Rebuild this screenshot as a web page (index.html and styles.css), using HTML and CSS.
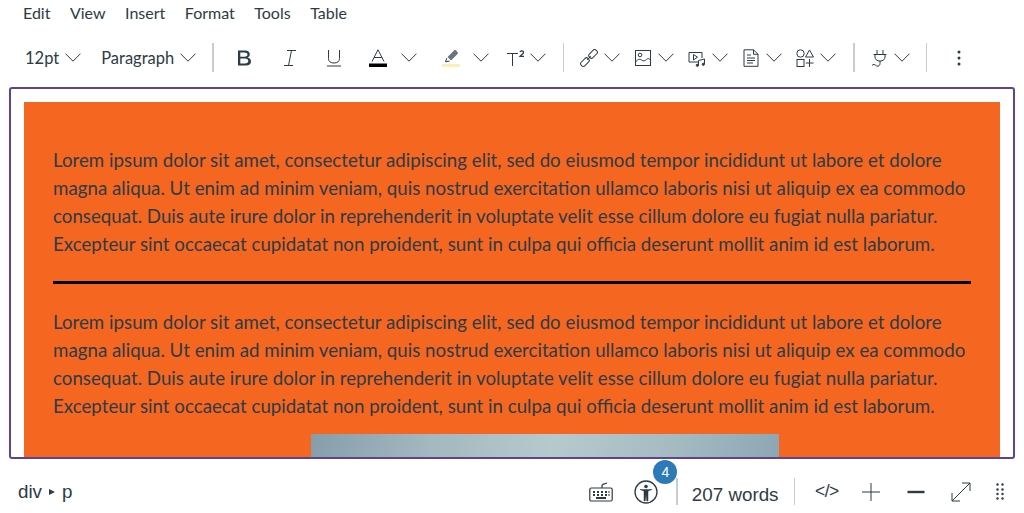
FILE: index.html
```html
<!DOCTYPE html>
<html lang="en">
<head>
  <meta charset="UTF-8" />
  <meta name="viewport" content="width=device-width, initial-scale=1.0"/>
  <title>Rich Content Editor</title>
  <link rel="stylesheet" href="styles.css">
</head>
<body>

  <!-- Menu bar -->
  <nav class="menubar">
    <span>Edit</span>
    <span>View</span>
    <span>Insert</span>
    <span>Format</span>
    <span>Tools</span>
    <span>Table</span>
  </nav>

  <!-- Toolbar -->
  <div class="toolbar">
    <div class="split text-split size-pick">
      <span>12pt</span>
      <svg class="chev" viewBox="0 0 16 9"><path d="M.5.7 8 8.200 15.500.7"/></svg>
    </div>
    <div class="split text-split block-pick">
      <span>Paragraph</span>
      <svg class="chev" viewBox="0 0 16 9"><path d="M.5.7 8 8.200 15.500.7"/></svg>
    </div>
    <i class="sep sep-first"></i>

    <svg class="icon bold" viewBox="0 0 18 18"><path d="M2 1.500h7c3 0 4.800 1.400 4.800 3.700 0 1.700-1 2.900-2.500 3.300 2.300.4 3.700 1.900 3.700 4.100 0 2.600-2 3.900-5 3.900H2zM4.300 3.400v4.300h4.300c1.800 0 2.900-.8 2.900-2.200s-1.100-2.100-2.900-2.100zM4.300 9.500v5h4.800c2 0 3.200-.9 3.200-2.500s-1.200-2.500-3.200-2.500z" fill="#2d3b45" stroke="none"/></svg>
    <svg class="icon italic" viewBox="0 0 18 18"><path d="M6 1.500h9M3 16.500h9M10.500 1.500 7.500 16.500"/></svg>
    <svg class="icon underline" viewBox="0 0 18 18"><path d="M3.500 1v8.500c0 3 2 4.500 5.500 4.500s5.500-1.500 5.500-4.500V1M2 17h14"/></svg>

    <div class="split color-split">
      <svg class="icon" viewBox="0 0 18 18"><path d="M3 12.500 9 .8l6 11.700M5 8.500h8"/><rect x="0" y="14.500" width="18" height="3.500" fill="#000" stroke="none"/></svg>
      <svg class="chev" viewBox="0 0 16 9"><path d="M.5.7 8 8.200 15.500.7"/></svg>
    </div>
    <div class="split color-split pen-split">
      <svg class="icon" viewBox="0 0 18 18"><path d="M12 1.500c.6-.6 1.400-.6 2 0l1.500 1.500c.6.600.6 1.400 0 2L9 11.500 5.500 8z" fill="#6b7780" stroke="none"/><path d="M4.800 9.200 3.500 12.800 7.500 12"/><rect x="0" y="15" width="18" height="3" fill="#fbeeb8" stroke="none"/></svg>
      <svg class="chev" viewBox="0 0 16 9"><path d="M.5.700 8 8.200 15.500.7"/></svg>
    </div>
    <div class="split sup-split">
      <svg class="icon" viewBox="0 0 18 18"><path d="M0 4.500h11M5.500 4.500v12.500"/><path d="M13 3c.3-1.400 3.600-1.500 3.600.4 0 1.300-2.700 2.400-3.600 4h4" stroke-width="1.300"/></svg>
      <svg class="chev" viewBox="0 0 16 9"><path d="M.5.700 8 8.200 15.500.7"/></svg>
    </div>
    <i class="sep sep-insert"></i>

    <div class="split insert-split">
      <svg class="icon" viewBox="0 0 18 18"><g transform="rotate(-45 9 9)"><rect x="-1.500" y="6.500" width="9.500" height="5" rx="2"/><rect x="10" y="6.500" width="9.500" height="5" rx="2"/><path d="M6.500 9h5"/></g></svg>
      <svg class="chev" viewBox="0 0 16 9"><path d="M.5.7 8 8.200 15.500.7"/></svg>
    </div>
    <div class="split insert-split">
      <svg class="icon" viewBox="0 0 18 18"><rect x="1.500" y="1.500" width="15" height="15"/><circle cx="6" cy="6" r="1.800"/><path d="M1.500 13c2-2.500 4-3.500 6-2s3.500 1 5-.5 3-1 4 .5"/></svg>
      <svg class="chev" viewBox="0 0 16 9"><path d="M.5.7 8 8.200 15.500.7"/></svg>
    </div>
    <div class="split insert-split">
      <svg class="icon" viewBox="0 0 18 18"><path d="M10 13H1V3.500h13V9"/><path d="M5.500 5.500 9.500 8.200 5.500 11z"/><path d="M10.500 16.800V11.500l6-1.500v5"/><circle cx="9.300" cy="16.300" r="1.100" fill="#2d3b45"/><circle cx="15.300" cy="15.300" r="1.100" fill="#2d3b45"/></svg>
      <svg class="chev" viewBox="0 0 16 9"><path d="M.5.7 8 8.200 15.500.7"/></svg>
    </div>
    <div class="split insert-split">
      <svg class="icon" viewBox="0 0 18 18"><path d="M2 .8h9.500L16 5.300v12H2zM11.500.8v4.500H16M5 6h4M5 9h8M5 11.500h8M5 14h6"/></svg>
      <svg class="chev" viewBox="0 0 16 9"><path d="M.5.7 8 8.200 15.500.7"/></svg>
    </div>
    <div class="split insert-split">
      <svg class="icon" viewBox="0 0 18 18"><circle cx="4.500" cy="4.500" r="3.700"/><path d="M13.500 1 17.500 8h-8z"/><rect x="1" y="10.500" width="7" height="7"/><path d="M13.500 10v8M9.800 14h7.700"/></svg>
      <svg class="chev" viewBox="0 0 16 9"><path d="M.5.7 8 8.200 15.500.7"/></svg>
    </div>
    <i class="sep sep-plug"></i>

    <div class="split insert-split plug-split">
      <svg class="icon" viewBox="0 0 18 18"><path d="M7 1v4.500M13 1v4.500M3.500 5.500h13M5 5.500v2.500c0 2.500 2 4 5 4s5-1.500 5-4V5.500M10 12v2.500c0 2-1.500 3-3 2.700-1.200-.3-1.500-1.700-3-1.700-.8 0-1.500.4-2 1"/></svg>
      <svg class="chev" viewBox="0 0 16 9"><path d="M.5.7 8 8.200 15.500.7"/></svg>
    </div>
    <i class="sep sep-more"></i>
    <svg class="more" viewBox="0 0 4 16"><circle cx="2" cy="2" r="1.500"/><circle cx="2" cy="8" r="1.500"/><circle cx="2" cy="14" r="1.500"/></svg>
  </div>

  <!-- Editor area -->
  <main class="editor">
    <div class="banner">
      <p>Lorem ipsum dolor sit amet, consectetur adipiscing elit, sed do eiusmod tempor incididunt ut labore et dolore magna aliqua. Ut enim ad minim veniam, quis nostrud exercitation ullamco laboris nisi ut aliquip ex ea commodo consequat. Duis aute irure dolor in reprehenderit in voluptate velit esse cillum dolore eu fugiat nulla pariatur. Excepteur sint occaecat cupidatat non proident, sunt in culpa qui officia deserunt mollit anim id est laborum.</p>
      <hr class="rule">
      <p>Lorem ipsum dolor sit amet, consectetur adipiscing elit, sed do eiusmod tempor incididunt ut labore et dolore magna aliqua. Ut enim ad minim veniam, quis nostrud exercitation ullamco laboris nisi ut aliquip ex ea commodo consequat. Duis aute irure dolor in reprehenderit in voluptate velit esse cillum dolore eu fugiat nulla pariatur. Excepteur sint occaecat cupidatat non proident, sunt in culpa qui officia deserunt mollit anim id est laborum.</p>
      <div class="photo"></div>
    </div>
  </main>

  <!-- Status bar -->
  <footer class="statusbar">
    <div class="path">div <span class="arrow"></span> p</div>
    <div class="status-tools">
      <svg class="st-key" viewBox="0 0 24 20"><path d="M13 6V4c0-1.500 1-2 2.500-2.200L18 1"/><rect x=".8" y="6" width="22.400" height="13" rx="1.500"/><path class="keys" d="M4 10h2M8 10h2M12 10h2M16 10h2M19.500 10h1M4 13h2M8 13h2M12 13h2M16 13h2M19.500 13h1M7 16h10" /></svg>
      <div class="a11y">
        <svg viewBox="0 0 24 24"><circle cx="12" cy="12" r="11"/><circle cx="12" cy="6.500" r="1.800" fill="#2d3b45" stroke="none"/><path d="M6 9.500h12L14 11v10h-1.200l-.8-6-.8 6H10V11z" fill="#2d3b45" stroke="#2d3b45" stroke-width=".5" stroke-linejoin="round"/></svg>
        <span class="badge">4</span>
      </div>
      <i class="sep sep-words"></i>
      <span class="words">207 words</span>
      <i class="sep sep-code"></i>
      <span class="code">&lt;/&gt;</span>
      <svg class="st-icon plus" viewBox="0 0 20 20"><path d="M10 1v18M1 10h18"/></svg>
      <svg class="st-icon minus" viewBox="0 0 20 20"><path d="M1.500 10h17" stroke-width="2.400"/></svg>
      <svg class="st-icon expand" viewBox="0 0 20 20"><path d="M1 19 19 1M11 1h8v8M1 11v8h8"/></svg>
      <svg class="grip" viewBox="0 0 8 17"><g><circle cx="1.500" cy="1.500" r="1.200"/><circle cx="6.500" cy="1.500" r="1.200"/><circle cx="1.500" cy="6.500" r="1.200"/><circle cx="6.500" cy="6.500" r="1.200"/><circle cx="1.500" cy="11" r="1.200"/><circle cx="6.500" cy="11" r="1.200"/><circle cx="1.500" cy="15.500" r="1.200"/><circle cx="6.500" cy="15.500" r="1.200"/></g></svg>
    </div>
  </footer>

</body>
</html>
```

FILE: styles.css
```css
* {
  box-sizing: border-box;
  margin: 0;
  padding: 0;
}

html, body {
  height: 513px;
  overflow: hidden;
}

body {
  background: #fff;
  color: #2d3b45;
  font-family: 'Lato', 'Liberation Sans', sans-serif;
}

svg {
  display: block;
  flex: none;
  fill: none;
  stroke: #2d3b45;
  stroke-width: 1;
}

/* menu */
.menubar {
  display: flex;
  gap: 19.500px;
  height: 24px;
  padding-left: 23px;
  align-items: center;
  font-size: 16px;
}

/* toolbar */
.toolbar {
  display: flex;
  align-items: center;
  height: 63px;
  padding-top: 4px;
  padding-left: 25px;
  font-size: 16.500px;
}

.split {
  display: flex;
  align-items: center;
  flex: none;
}

.text-split { gap: 6px; }
.block-pick { margin-left: 20px; }

.chev {
  width: 16px;
  height: 9px;
}

.icon {
  width: 18px;
  height: 18px;
}

.sep {
  display: block;
  flex: none;
  width: 1.500px;
  height: 29px;
  background: #c7cdd1;
}

.sep-first { margin: 0 22px 0 16px; }
.italic { margin-left: 27px; }
.underline { margin-left: 26px; }

.color-split { gap: 14px; margin-left: 26px; }
.pen-split { gap: 13px; margin-left: 25px; }
.sup-split { gap: 5px; margin-left: 18px; }

.sep-insert { margin: 0 16px 0 17px; }
.insert-split { gap: 6px; }
.insert-split + .insert-split { margin-left: 14px; }
.sep-plug { margin: 0 15px 0 17px; }
.sep-more { margin-left: 16px; }

.more {
  width: 4px;
  height: 16px;
  margin-left: 30px;
  fill: #2d3b45;
  stroke: none;
}

/* editor */
.editor {
  width: 1006px;
  height: 372px;
  margin-left: 9px;
  padding: 13px 13px 0;
  border: 2px solid #5f4393;
  border-radius: 3px;
  overflow: hidden;
}

.banner {
  background: #f56721;
  padding: 44px 29px 0;
  height: 400px;
  font-size: 18.730px;
  line-height: 28px;
}

.rule {
  border: 0;
  height: 3px;
  background: #000;
  margin: 23px 0 24px;
}

.photo {
  width: 468px;
  height: 100px;
  margin: 14px 0 0 258px;
  background: linear-gradient(100deg, #879dab 0%, #a3b8bf 25%, #b6c9cd 50%, #a5bbc2 75%, #8aa4b1 100%);
}

/* status bar */
.statusbar {
  display: flex;
  justify-content: space-between;
  align-items: center;
  height: 55px;
  padding: 10px 20px 0 18px;
  font-family: 'Liberation Sans', Arial, sans-serif;
  font-size: 18.800px;
}

.path {
  display: flex;
  align-items: center;
  gap: 7px;
}

.arrow {
  width: 0;
  height: 0;
  border-left: 6px solid #2d3b45;
  border-top: 3.500px solid transparent;
  border-bottom: 3.500px solid transparent;
}

.status-tools {
  display: flex;
  align-items: center;
}

.st-key {
  width: 24px;
  height: 20px;
  stroke-width: 1.200;
}

.keys {
  stroke-width: 1.800;
}

.a11y {
  position: relative;
  margin-left: 21px;
}

.a11y svg {
  width: 24px;
  height: 24px;
  stroke-width: 1.300;
}

.badge {
  position: absolute;
  left: 19px;
  top: -20px;
  width: 24px;
  height: 24px;
  border-radius: 50%;
  background: #2d7ab8;
  color: #fff;
  font-size: 14px;
  line-height: 24px;
  text-align: center;
}

.sep-words { height: 27px; margin: 0 14px 0 18px; }
.sep-code { height: 27px; margin: 0 20px 0 15px; }

.words {
  margin-top: 6px;
}

.code {
  font-size: 17.500px;
  letter-spacing: -.5px;
  width: 23px;
}

.st-icon {
  width: 20px;
  height: 20px;
}

.plus { margin-left: 23px; }
.minus { margin-left: 25px; }
.expand { margin-left: 25px; }

.grip {
  width: 8px;
  height: 17px;
  margin-left: 25px;
  fill: #2d3b45;
  stroke: none;
}
```
